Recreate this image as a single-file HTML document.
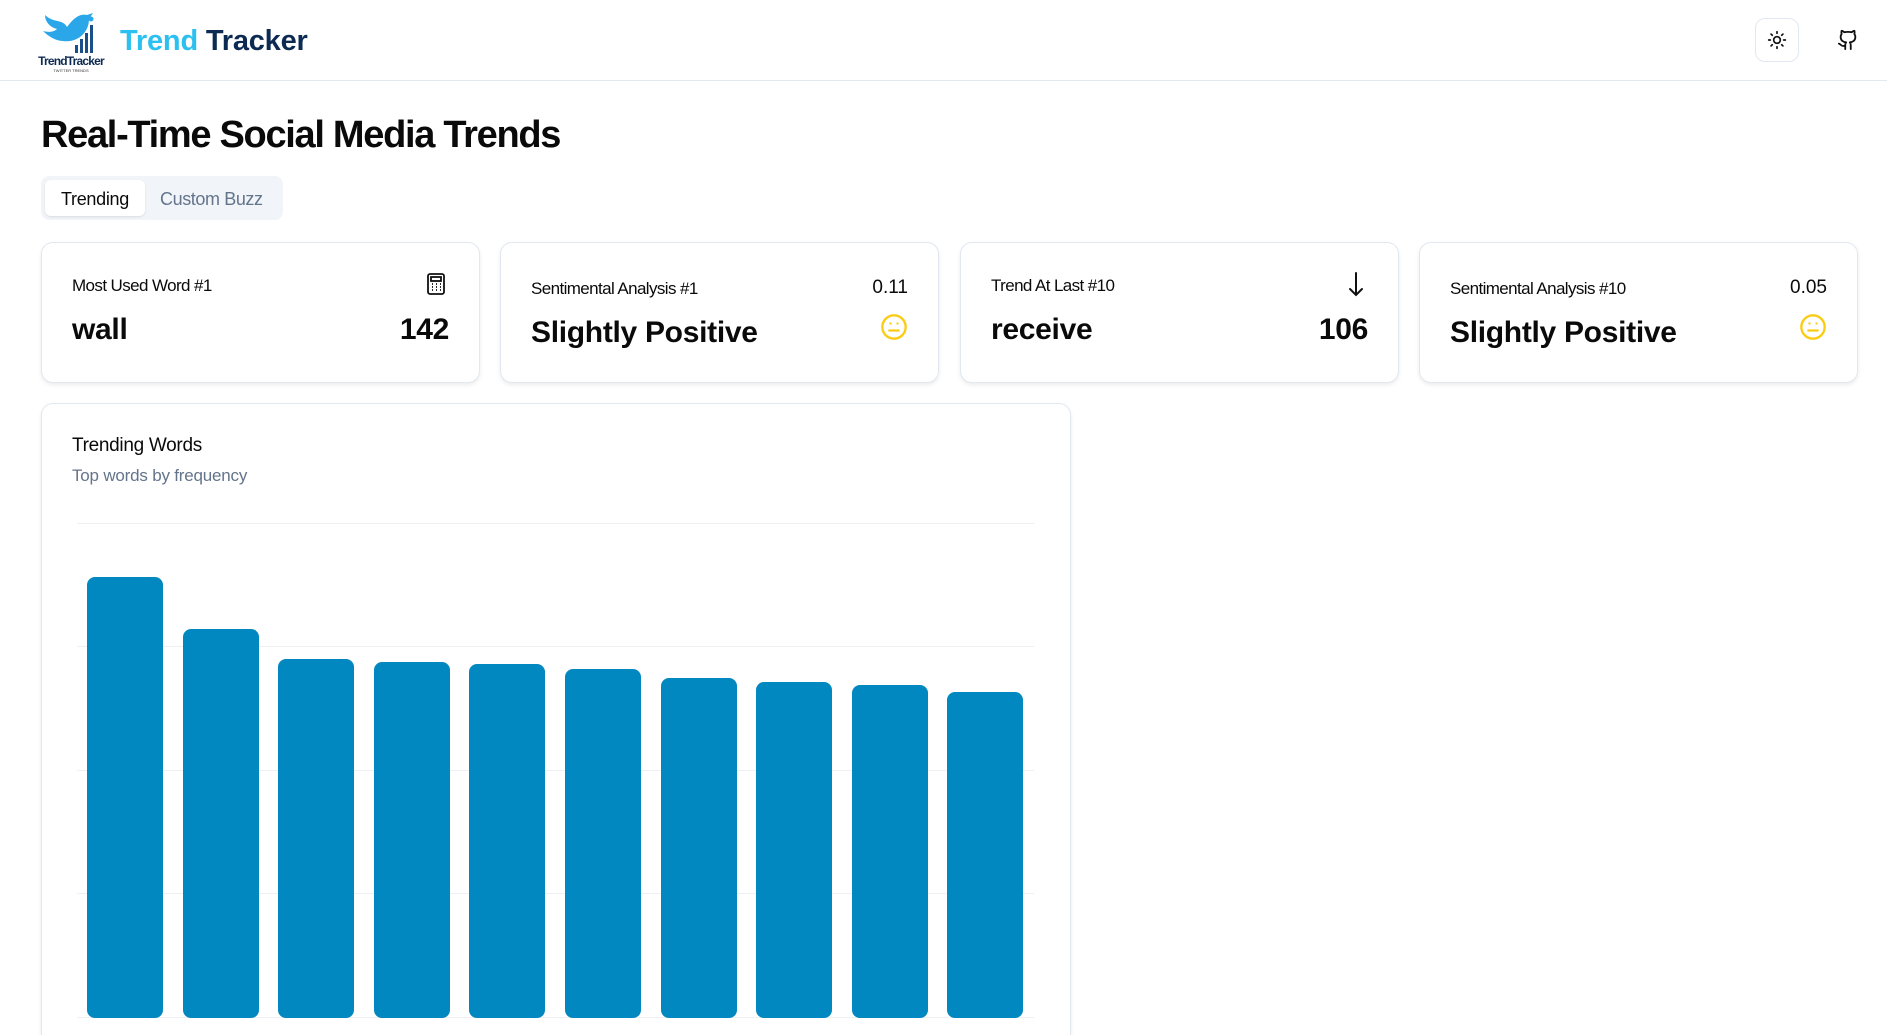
<!DOCTYPE html>
<html><head><meta charset="utf-8"><style>
*{box-sizing:border-box;margin:0;padding:0}
html,body{width:1887px;height:1035px;overflow:hidden}
body{background:#fff;font-family:"Liberation Sans",sans-serif;color:#0a0a0a;position:relative}
#wrap{position:absolute;left:0;top:0;width:1887px;height:1035px;overflow:hidden}
.hdr{position:absolute;left:0;top:0;width:1887px;height:81px;border-bottom:1px solid #e2e8f0}
.abs{position:absolute}
.card{position:absolute;background:#fff;border:1px solid #e2e8f0;border-radius:12px;box-shadow:0 2px 4px rgba(0,0,0,.08)}
.lbl{position:absolute;font-size:17px;letter-spacing:-0.6px}
.val{position:absolute;font-size:30px;font-weight:bold;letter-spacing:-0.3px}
</style></head><body><div id="wrap">
<div class="hdr">
 <svg class="abs" style="left:33px;top:5px" width="76" height="68" viewBox="0 0 76 68">
  <path d="M12 10 C20 18 30 14 34 22 C40 14 46 8 54 10 L60 8 L56 14 C56 28 44 38 30 36 C22 36 14 30 10 26 C18 28 22 26 24 24 C16 22 12 16 12 10Z" fill="#2ba6e8"/>
  <rect x="42" y="40" width="3" height="8" fill="#1a4f8a"/><rect x="47" y="34" width="3" height="14" fill="#1a4f8a"/><rect x="52" y="28" width="3" height="20" fill="#1a4f8a"/><rect x="57" y="20" width="3" height="28" fill="#1a4f8a"/>
  <circle cx="58" cy="14" r="2.5" fill="#2ba6e8"/>
  <text x="38" y="60" text-anchor="middle" font-size="12" font-weight="bold" fill="#0d2a52" font-family="Liberation Sans" letter-spacing="-0.8">TrendTracker</text>
  <text x="38" y="67" text-anchor="middle" font-size="4" fill="#333" font-family="Liberation Sans">TWITTER TRENDS</text>
 </svg>
 <div class="abs" style="left:120px;top:25px;font-size:29px;font-weight:bold;color:#0d2a52;letter-spacing:-0.2px"><span style="color:#2cc0f0">Trend</span> Tracker</div>
 <div class="abs" style="left:1755px;top:18px;width:44px;height:44px;border:1px solid #e2e8f0;border-radius:10px"></div>
 <svg class="abs" style="left:1767px;top:30px" width="20" height="20" viewBox="0 0 24 24" fill="none" stroke="#111" stroke-width="2" stroke-linecap="round"><circle cx="12" cy="12" r="4"/><path d="M12 2v2M12 20v2M4.9 4.9l1.4 1.4M17.7 17.7l1.4 1.4M2 12h2M20 12h2M6.3 17.7l-1.4 1.4M19.1 4.9l-1.4 1.4"/></svg>
 <svg class="abs" style="left:1837px;top:29px" width="22" height="22" viewBox="0 0 24 24" fill="none" stroke="#111" stroke-width="2" stroke-linecap="round" stroke-linejoin="round"><path d="M15 22v-4a4.8 4.8 0 0 0-1-3.5c3 0 6-2 6-5.5.08-1.25-.27-2.48-1-3.5.28-1.150.28-2.35 0-3.5 0 0-1 0-3 1.5-2.64-.5-5.36-.5-8 0C6 2 5 2 5 2c-.3 1.15-.3 2.35 0 3.5A5.4 5.4 0 0 0 4 9c0 3.5 3 5.5 6 5.5-.39.49-.68 1.05-.85 1.65-.17.6-.22 1.23-.15 1.85v4M9 18c-4.51 2-5-2-7-2"/></svg>
</div>
<div class="abs" style="left:41px;top:114px;font-size:38px;font-weight:bold;letter-spacing:-1.3px">Real-Time Social Media Trends</div>
<div class="abs" style="left:41px;top:176px;width:242px;height:44px;background:#f1f5f9;border-radius:8px"></div>
<div class="abs" style="left:45px;top:180px;width:100px;height:36px;background:#fff;border-radius:6px;box-shadow:0 1px 2px rgba(0,0,0,.1);font-size:18px;text-align:center;line-height:38px;letter-spacing:-0.3px">Trending</div>
<div class="abs" style="left:160px;top:180px;height:36px;font-size:18px;line-height:38px;color:#64748b;letter-spacing:-0.4px">Custom Buzz</div>

<div class="card" style="left:41px;top:242px;width:439px;height:141px">
 <div class="lbl" style="left:30px;top:33px">Most Used Word #1</div>
 <svg class="abs" style="left:384px;top:30px" width="20" height="22" viewBox="0 0 20 22" fill="none" stroke="#111" stroke-width="1.8"><rect x="2" y="1" width="16" height="20" rx="2"/><rect x="5" y="4" width="10" height="4"/><path d="M6 11h1M10 11h1M14 11h1M6 14h1M10 14h1M14 14h1M6 17h1M10 17h1M14 17h1"/></svg>
 <div class="val" style="left:30px;top:70px">wall</div>
 <div class="val" style="right:30px;top:70px">142</div>
</div>
<div class="card" style="left:500px;top:242px;width:439px;height:141px">
 <div class="lbl" style="left:30px;top:36px">Sentimental Analysis #1</div>
 <div class="abs" style="right:30px;top:34px;font-size:19px">0.11</div>
 <div class="val" style="left:30px;top:73px">Slightly Positive</div>
 <svg class="abs" style="right:30px;top:70px" width="28" height="28" viewBox="0 0 24 24" fill="none" stroke="#facc15" stroke-width="2" stroke-linecap="round"><circle cx="12" cy="12" r="10"/><path d="M8 15h8M9 9h.01M15 9h.01"/></svg>
</div>
<div class="card" style="left:960px;top:242px;width:439px;height:141px">
 <div class="lbl" style="left:30px;top:33px">Trend At Last #10</div>
 <svg class="abs" style="left:387px;top:28px" width="16" height="26" viewBox="0 0 16 26" fill="none" stroke="#111" stroke-width="2" stroke-linecap="round"><path d="M8 2v22M2 18l6 6 6-6"/></svg>
 <div class="val" style="left:30px;top:70px">receive</div>
 <div class="val" style="right:30px;top:70px">106</div>
</div>
<div class="card" style="left:1419px;top:242px;width:439px;height:141px">
 <div class="lbl" style="left:30px;top:36px">Sentimental Analysis #10</div>
 <div class="abs" style="right:30px;top:34px;font-size:19px">0.05</div>
 <div class="val" style="left:30px;top:73px">Slightly Positive</div>
 <svg class="abs" style="right:30px;top:70px" width="28" height="28" viewBox="0 0 24 24" fill="none" stroke="#facc15" stroke-width="2" stroke-linecap="round"><circle cx="12" cy="12" r="10"/><path d="M8 15h8M9 9h.01M15 9h.01"/></svg>
</div>

<div class="card" style="left:41px;top:403px;width:1030px;height:660px">
 <div class="abs" style="left:30px;top:31px;font-size:19px;letter-spacing:-0.3px">Trending Words</div>
 <div class="abs" style="left:30px;top:62px;font-size:17px;color:#64748b;letter-spacing:-0.2px">Top words by frequency</div>
</div>
<svg class="abs" style="left:0;top:0" width="1887" height="1035">
 <g stroke="#eef0f3" stroke-width="1"><path d="M77 523.5H1034M77 646.5H1034M77 770.5H1034M77 893.5H1034M77 1017.5H1034"/></g>
 <g fill="#0288c0">
  <rect x="87" y="577" width="76" height="441" rx="8"/>
  <rect x="183" y="629" width="76" height="389" rx="8"/>
  <rect x="278" y="659" width="76" height="359" rx="8"/>
  <rect x="374" y="662" width="76" height="356" rx="8"/>
  <rect x="469" y="664" width="76" height="354" rx="8"/>
  <rect x="565" y="669" width="76" height="349" rx="8"/>
  <rect x="661" y="678" width="76" height="340" rx="8"/>
  <rect x="756" y="682" width="76" height="336" rx="8"/>
  <rect x="852" y="685" width="76" height="333" rx="8"/>
  <rect x="947" y="692" width="76" height="326" rx="8"/>
 </g>
</svg>
</div></body></html>
